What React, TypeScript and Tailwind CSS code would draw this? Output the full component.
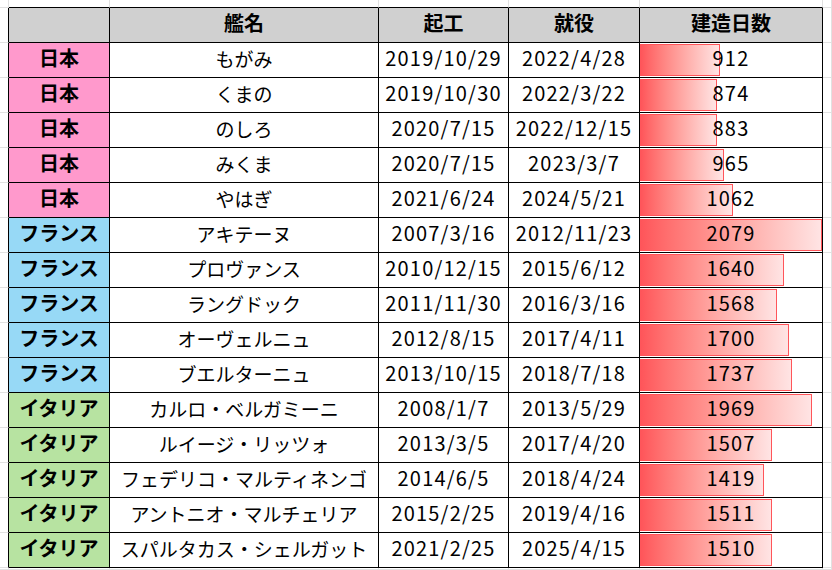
import React from 'react';

type Ship = {
  country: '日本' | 'フランス' | 'イタリア';
  name: string;
  start: string;
  commission: string;
  days: number;
};

const SHIPS: Ship[] = [
  { country: '日本', name: 'もがみ', start: '2019/10/29', commission: '2022/4/28', days: 912 },
  { country: '日本', name: 'くまの', start: '2019/10/30', commission: '2022/3/22', days: 874 },
  { country: '日本', name: 'のしろ', start: '2020/7/15', commission: '2022/12/15', days: 883 },
  { country: '日本', name: 'みくま', start: '2020/7/15', commission: '2023/3/7', days: 965 },
  { country: '日本', name: 'やはぎ', start: '2021/6/24', commission: '2024/5/21', days: 1062 },
  { country: 'フランス', name: 'アキテーヌ', start: '2007/3/16', commission: '2012/11/23', days: 2079 },
  { country: 'フランス', name: 'プロヴァンス', start: '2010/12/15', commission: '2015/6/12', days: 1640 },
  { country: 'フランス', name: 'ラングドック', start: '2011/11/30', commission: '2016/3/16', days: 1568 },
  { country: 'フランス', name: 'オーヴェルニュ', start: '2012/8/15', commission: '2017/4/11', days: 1700 },
  { country: 'フランス', name: 'ブエルターニュ', start: '2013/10/15', commission: '2018/7/18', days: 1737 },
  { country: 'イタリア', name: 'カルロ・ベルガミーニ', start: '2008/1/7', commission: '2013/5/29', days: 1969 },
  { country: 'イタリア', name: 'ルイージ・リッツォ', start: '2013/3/5', commission: '2017/4/20', days: 1507 },
  { country: 'イタリア', name: 'フェデリコ・マルティネンゴ', start: '2014/6/5', commission: '2018/4/24', days: 1419 },
  { country: 'イタリア', name: 'アントニオ・マルチェリア', start: '2015/2/25', commission: '2019/4/16', days: 1511 },
  { country: 'イタリア', name: 'スパルタカス・シェルガット', start: '2021/2/25', commission: '2025/4/15', days: 1510 },
];

const COUNTRY_BG: Record<Ship['country'], string> = {
  日本: 'bg-[#ff99cc]',
  フランス: 'bg-[#97d9f6]',
  イタリア: 'bg-[#b7e3a1]',
};

const MAX_DAYS = Math.max(...SHIPS.map(s => s.days));
const BAR_MAX = 182;

// excel gridline filler cells around the table
const Ghost = ({ className = '' }: { className?: string }) => (
  <div className={`border-r border-b border-[#e1e1e1] ${className}`} />
);

const Cell = ({ className = '', children }: { className?: string; children?: React.ReactNode }) => (
  <div className={`relative flex items-center justify-center pb-[4px] border-r border-b border-black whitespace-nowrap ${className}`}>
    {children}
  </div>
);

// digits are wider in the sheet font
const num = 'text-[20px] tracking-[1.2px]';
const head = 'bg-[#d0d0d0] font-bold text-[20px]';

const App: React.FC = () => {
  return (
    <div
      className="w-[832px] h-[570px] overflow-hidden bg-white text-black text-[19px] leading-none"
      style={{ fontFamily: '"Noto Sans CJK JP", "Noto Sans", sans-serif' }}
    >
      <div className="grid grid-cols-[9px_101px_269px_130px_131px_183px_1fr] grid-rows-[8px_repeat(16,35px)_1fr] h-full">
        {/* top gridline row */}
        <Ghost />
        <Ghost className="border-b-black" />
        <Ghost className="border-b-black" />
        <Ghost className="border-b-black" />
        <Ghost className="border-b-black" />
        <Ghost className="border-b-black" />
        <Ghost />

        {/* header */}
        <Ghost className="border-r-black" />
        <Cell className={head} />
        <Cell className={head}>艦名</Cell>
        <Cell className={head}>起工</Cell>
        <Cell className={head}>就役</Cell>
        <Cell className={head}>建造日数</Cell>
        <Ghost />

        {SHIPS.map(ship => (
          <React.Fragment key={ship.name}>
            <Ghost className="border-r-black" />
            <Cell className={`${COUNTRY_BG[ship.country]} font-bold text-[20px]`}>{ship.country}</Cell>
            <Cell>{ship.name}</Cell>
            <Cell className={num}>{ship.start}</Cell>
            <Cell className={num}>{ship.commission}</Cell>
            <Cell className={num}>
              <div
                className="absolute left-0 top-[1px] bottom-[1px] border border-[#ff555a] bg-gradient-to-r from-[#ff555a] to-[#ffe4e4]"
                style={{ width: Math.round((ship.days / MAX_DAYS) * BAR_MAX) }}
              />
              <span className="relative">{ship.days}</span>
            </Cell>
            <Ghost />
          </React.Fragment>
        ))}

        {/* bottom gridline row */}
        <Ghost />
        <Ghost />
        <Ghost />
        <Ghost />
        <Ghost />
        <Ghost />
        <Ghost />
      </div>
    </div>
  );
};

export default App;
